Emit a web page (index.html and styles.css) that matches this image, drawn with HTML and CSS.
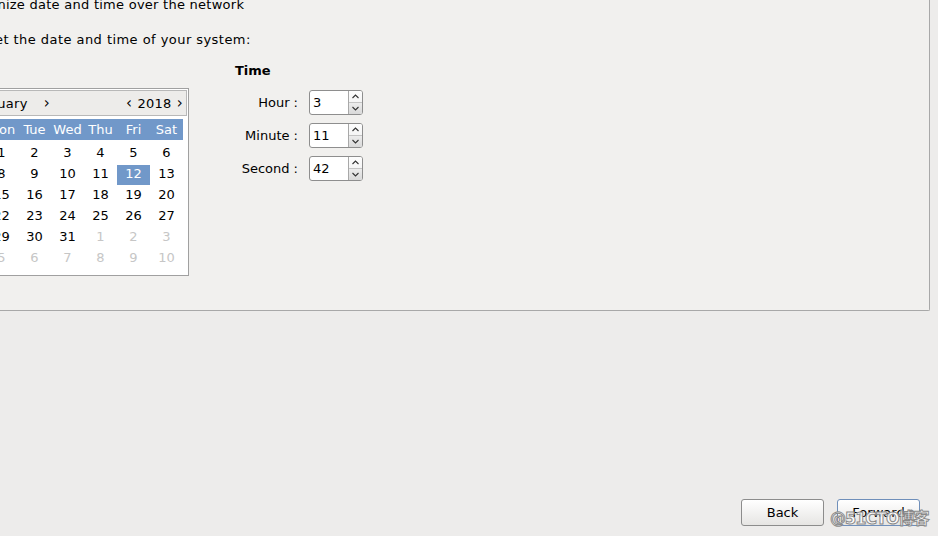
FILE: index.html
```html
<!DOCTYPE html>
<html lang="en">
<head>
  <meta charset="UTF-8">
  <title>Date and Time</title>
  <link rel="stylesheet" href="styles.css">
</head>
<body>

  <div class="panel">
    <p class="sync-line"><span class="check"></span>Synchronize date and time over the network</p>
    <p class="manual-line">Manually set the date and time of your system:</p>

    <div class="pickers">
      <div class="date-col">
        <div class="calendar">
          <div class="cal-head">
            <span class="nav">&#8249;</span><span class="month">January</span><span class="nav">&#8250;</span>
            <span class="spacer"></span>
            <span class="nav">&#8249;</span><span class="year">2018</span><span class="nav last">&#8250;</span>
          </div>
          <div class="cal-grid">
            <div class="wd">Sun</div><div class="wd">Mon</div><div class="wd">Tue</div><div class="wd">Wed</div><div class="wd">Thu</div><div class="wd">Fri</div><div class="wd">Sat</div>
          </div>
          <div class="cal-grid" id="days"></div>
        </div>
      </div>

      <div class="time-col">
        <h3>Time</h3>
        <div class="time-grid">
          <label>Hour :</label>
          <div class="spin"><span class="spin-value">3</span><span class="spin-btns"><i><svg width="7" height="5" viewBox="0 0 7 5"><path d="M0.5 4 L3.5 1 L6.5 4" fill="none" stroke="#333" stroke-width="1.1"/></svg></i><i class="down"><svg width="7" height="5" viewBox="0 0 7 5"><path d="M0.5 1 L3.5 4 L6.5 1" fill="none" stroke="#333" stroke-width="1.1"/></svg></i></span></div>
          <label>Minute :</label>
          <div class="spin"><span class="spin-value">11</span><span class="spin-btns"><i><svg width="7" height="5" viewBox="0 0 7 5"><path d="M0.5 4 L3.5 1 L6.5 4" fill="none" stroke="#333" stroke-width="1.1"/></svg></i><i class="down"><svg width="7" height="5" viewBox="0 0 7 5"><path d="M0.5 1 L3.5 4 L6.5 1" fill="none" stroke="#333" stroke-width="1.1"/></svg></i></span></div>
          <label>Second :</label>
          <div class="spin"><span class="spin-value">42</span><span class="spin-btns"><i><svg width="7" height="5" viewBox="0 0 7 5"><path d="M0.5 4 L3.5 1 L6.5 4" fill="none" stroke="#333" stroke-width="1.1"/></svg></i><i class="down"><svg width="7" height="5" viewBox="0 0 7 5"><path d="M0.5 1 L3.5 4 L6.5 1" fill="none" stroke="#333" stroke-width="1.1"/></svg></i></span></div>
        </div>
      </div>
    </div>
  </div>

  <div class="button-row">
    <button>Back</button>
    <button class="default">Forward</button>
  </div>

  <span class="watermark">@51CTO博客</span>

  <script>
    // January 2018 starts on a Monday
    var days = document.getElementById('days');
    var cells = [31];
    for (var d = 1; d <= 31; d++) cells.push(d);
    for (var n = 1; cells.length < 42; n++) cells.push(n);
    cells.forEach(function (val, i) {
      var el = document.createElement('div');
      el.className = 'day';
      if (i === 0 || i > 31) el.className += ' other';
      if (i === 12) el.className += ' selected';
      el.textContent = val;
      days.appendChild(el);
    });
  </script>
</body>
</html>
```

FILE: styles.css
```css
body {
  margin: 0;
  width: 938px;
  height: 536px;
  overflow: hidden;
  background: #edeceb;
  font-family: 'DejaVu Sans', sans-serif;
  font-size: 13px;
  color: #000;
  display: flex;
  flex-direction: column;
  position: relative;
}

p {
  margin: 0;
}

.panel {
  width: 930px;
  height: 311px;
  box-sizing: border-box;
  background: #f1f0ee;
  border-right: 1px solid #a8a8a8;
  border-bottom: 1px solid #a8a8a8;
  border-bottom-right-radius: 2px;
  overflow: hidden;
}

.sync-line,
.manual-line {
  line-height: 18px;
  white-space: nowrap;
}

.sync-line {
  letter-spacing: 0.26px;
  margin-left: -80px;
  margin-top: -4px;
  display: flex;
  align-items: center;
}

.check {
  display: inline-block;
  width: 13px;
  height: 13px;
  border: 1px solid #888;
  background: #fff;
  margin-right: 8px;
}

.manual-line {
  letter-spacing: 0.45px;
  margin-left: -79px;
  margin-top: 17px;
}

.pickers {
  display: flex;
  margin-top: 9px;
}

/* カレンダー */
.date-col {
  margin-left: -54px;
  padding-top: 30px;
}

.calendar {
  width: 243px;
  box-sizing: border-box;
  border: 1px solid #a0a0a0;
  background: #fff;
  padding: 1px 4px 6px 5px;
}

.cal-head {
  display: flex;
  align-items: center;
  height: 24px;
  margin-right: -3px;
  margin-left: -4px;
  border: 1px solid #b8b8b8;
  background: #edecea;
  padding: 0 1px 0 3px;
  margin-bottom: 3px;
  letter-spacing: 0.3px;
}

.cal-head .nav {
  font-size: 15px;
  padding: 0 5px;
}

.cal-head .nav.last {
  padding-right: 2px;
}

.cal-head .spacer {
  flex: 1;
}

.cal-head .month {
  padding: 0 11px 0 8px;
}

.cal-grid {
  display: grid;
  grid-template-columns: repeat(7, 33px);
}

.wd {
  background: #7198c9;
  color: #fff;
  height: 21px;
  line-height: 21px;
  text-align: center;
  margin-bottom: 3px;
}

.day {
  height: 21px;
  line-height: 20px;
  text-align: center;
}

.day.other {
  color: #c6c6c6;
}

.day.selected {
  background: #7198c9;
  color: #fff;
  height: 20px;
  margin-top: 1px;
  line-height: 18px;
}

/* 時刻 */
.time-col {
  margin-left: 46px;
}

.time-col h3 {
  margin: 0;
  font-size: 13px;
  font-weight: bold;
  line-height: 18px;
  padding-top: 4px;
}

.time-grid {
  display: grid;
  grid-template-columns: 57px auto;
  column-gap: 11px;
  row-gap: 8px;
  margin-top: 10px;
  margin-left: 6px;
  align-items: center;
}

.time-grid label {
  text-align: right;
  white-space: nowrap;
}

.spin {
  display: flex;
  width: 54px;
  height: 25px;
  box-sizing: border-box;
  border: 1px solid #8e8e8e;
  border-radius: 3px;
  background: #fff;
  overflow: hidden;
}

.spin-value {
  flex: 1;
  padding-left: 3px;
  line-height: 23px;
}

.spin-btns {
  width: 13px;
  border-left: 1px solid #a8a8a8;
  display: flex;
  flex-direction: column;
  background: linear-gradient(#fdfdfd, #ececec);
}

.spin-btns i {
  flex: 1;
  display: flex;
  align-items: center;
  justify-content: center;
}

.spin-btns i.down {
  border-top: 1px solid #c4c4c4;
  background: linear-gradient(#ececec, #d9d9d9);
}

/* ボタン */
.button-row {
  margin-top: auto;
  display: flex;
  justify-content: flex-end;
  gap: 13px;
  padding: 0 18px 10px 0;
}

button {
  width: 83px;
  height: 27px;
  font-family: 'DejaVu Sans', sans-serif;
  font-size: 13px;
  color: #000;
  border: 1px solid #8c8c8c;
  border-radius: 3px;
  background: linear-gradient(#ffffff, #e6e5e3);
}

button.default {
  border-color: #6f8fba;
}

.watermark {
  position: absolute;
  left: 830px;
  top: 505px;
  font-family: 'DejaVu Sans', 'Noto Sans CJK SC', sans-serif;
  font-size: 16px;
  font-weight: bold;
  color: rgba(255, 255, 255, 0.85);
  -webkit-text-stroke: 1px #8a8a8a;
  letter-spacing: -1px;
}
```
